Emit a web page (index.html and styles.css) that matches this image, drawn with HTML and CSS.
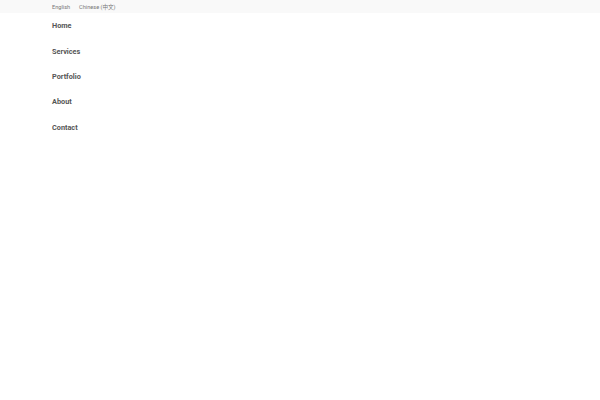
FILE: index.html
```html
<!DOCTYPE html>
<html>
<head>
<meta charset="utf-8">
<link rel="stylesheet" href="styles.css">
</head>
<body>
<header class="header">
  <div class="topbar">
    <a class="lang" href="#">English</a>
    <a class="lang" href="#">Chinese (中文)</a>
  </div>
  <nav class="nav">
    <a class="nav-link" href="#">Home</a>
    <a class="nav-link" href="#">Services</a>
    <a class="nav-link" href="#">Portfolio</a>
    <a class="nav-link" href="#">About</a>
    <a class="nav-link" href="#">Contact</a>
  </nav>
</header>
</body>
</html>
```
FILE: styles.css
```css
html, body {
  margin: 0;
  padding: 0;
  background: #ffffff;
  font-family: Roboto, "Noto Sans CJK SC", sans-serif;
}
.header {
  background: #ffffff;
  box-shadow: 0 1px 4px rgba(0, 0, 0, 0.06);
}
.topbar {
  height: 13px;
  background: #f9f9f9;
  padding-left: 52px;
  display: flex;
  align-items: center;
  gap: 9px;
}
.lang {
  font-size: 5.6px;
  color: #777777;
  text-decoration: none;
}
.nav {
  display: flex;
  flex-direction: column;
  padding-left: 52px;
}
.nav-link {
  height: 25.4px;
  display: flex;
  align-items: center;
  font-size: 7.3px;
  font-weight: 700;
  color: #555555;
  text-decoration: none;
}
```
